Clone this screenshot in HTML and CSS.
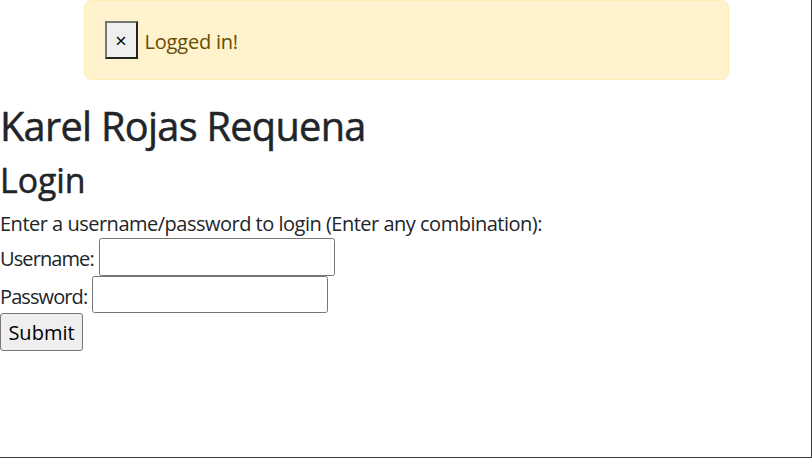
FILE: index.html
```html
<!DOCTYPE html>
<html lang="en">
<head>
<meta charset="utf-8">
<title>Login</title>
<link rel="stylesheet" href="styles.css">
</head>
<body>
<div class="container">
  <div class="alert"><button class="close" type="button">×</button> <span class="alert-text">Logged in!</span></div>
</div>
<h1 class="title">Karel Rojas Requena</h1>
<h2 class="subtitle">Login</h2>
<form class="login">
  <div class="intro">Enter a username/password to login (Enter any combination):</div>
  <div class="row"><label class="lbl">Username:</label> <input class="field" type="text"></div>
  <div class="row"><label class="lbl">Password:</label> <input class="field" type="password"></div>
  <div class="row"><button class="submit" type="submit">Submit</button></div>
</form>
<div class="frame"></div>
</body>
</html>
```
FILE: styles.css
```css
html, body {
  margin: 0;
  padding: 0;
}
body {
  font-family: "Open Sans", "Noto Sans", sans-serif;
  font-size: 20px;
  line-height: 30px;
  color: #212529;
  background: #fff;
  letter-spacing: -0.5px;
}
.container {
  width: 675px;
  box-sizing: border-box;
  margin: 0 auto;
  padding: 0 15px;
}
.alert {
  background: #fff3cd;
  border: 1px solid #ffecb5;
  border-radius: 7.5px;
  padding: 20px;
  color: #664d03;
  margin-bottom: 20px;
  letter-spacing: -0.2px;
}
.alert-text {
  vertical-align: -2px;
}
.close {
  font-family: inherit;
  font-size: 20px;
  line-height: 30px;
  color: #000;
  background: #efefef;
  border-style: solid;
  border-width: 2px;
  border-color: #767676 #222 #222 #767676;
  border-radius: 0;
  padding: 3px 8px 0.5px;
  margin: 0 2px 0 0;
  width: 33px;
  height: 38px;
  box-sizing: border-box;
  vertical-align: -1px;
}
.title {
  font-size: 39.7px;
  font-weight: 400;
  line-height: 1.2;
  margin: 0 0 7px;
  padding-top: 3px;
  letter-spacing: -0.7px;
  -webkit-text-stroke: 0.5px currentColor;
}
.subtitle {
  font-size: 33.8px;
  font-weight: 400;
  line-height: 1.2;
  margin: 0 0 8px;
  padding-top: 2px;
  letter-spacing: 0;
  -webkit-text-stroke: 0.5px currentColor;
}
.login {
  margin: 0;
}
.intro {
  padding-top: 1px;
  margin-bottom: -1px;
}
.lbl {
  letter-spacing: -0.9px;
  vertical-align: -2px;
}
.field {
  font-family: inherit;
  font-size: 20px;
  line-height: 30px;
  width: 236px;
  height: 37.5px;
  box-sizing: border-box;
  border: 1px solid #767676;
  border-radius: 2.5px;
  padding: 0 2px;
  margin: 0;
  background: #fff;
}
.submit {
  font-family: inherit;
  font-size: 20px;
  line-height: 30px;
  color: #000;
  background: #efefef;
  border: 1px solid #767676;
  border-radius: 3px;
  height: 37.5px;
  width: 83px;
  box-sizing: border-box;
  padding: 2px 0 0;
  margin: 0;
}
.frame {
  position: fixed;
  inset: 0;
  border-right: 1px solid #3a3a3a;
  border-bottom: 1px solid #3a3a3a;
  pointer-events: none;
}
```
